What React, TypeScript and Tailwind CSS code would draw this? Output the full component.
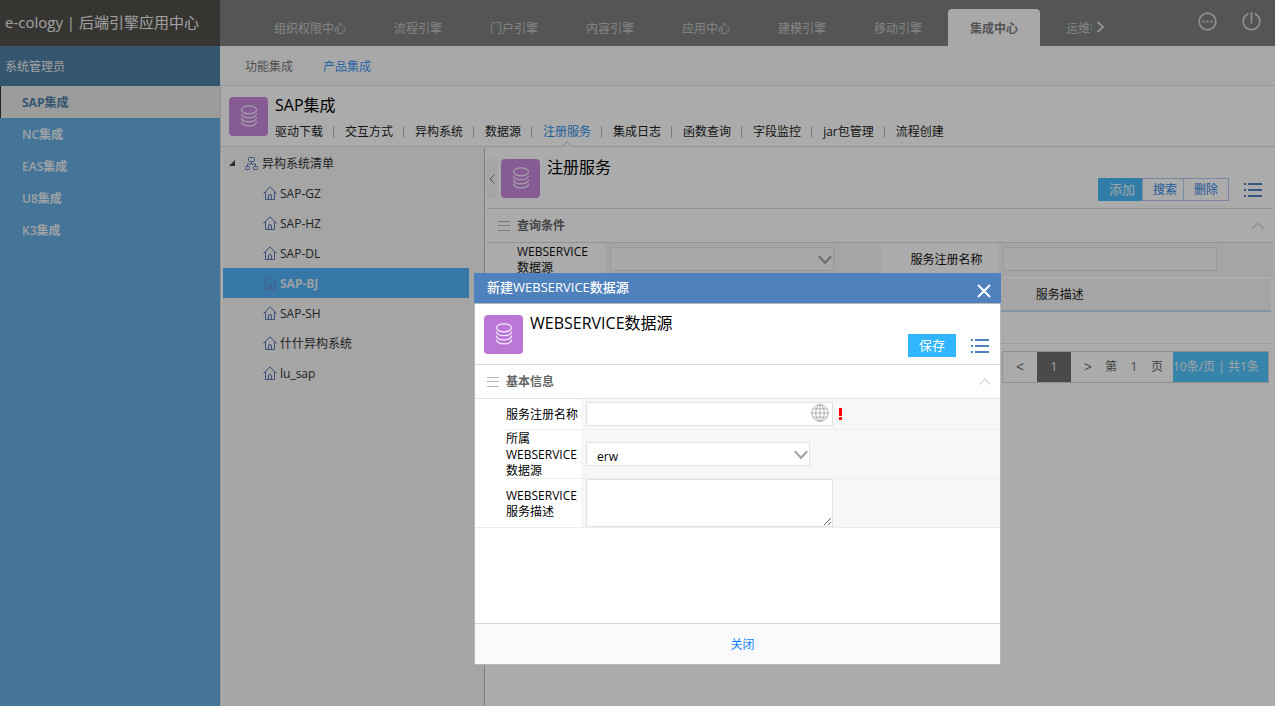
import React from 'react';
import clsx from 'clsx';

const topTabs = ['组织权限中心', '流程引擎', '门户引擎', '内容引擎', '应用中心', '建模引擎', '移动引擎', '集成中心', '运维中心'];
const sideItems = ['SAP集成', 'NC集成', 'EAS集成', 'U8集成', 'K3集成'];
const menuItems = ['驱动下载', '交互方式', '异构系统', '数据源', '注册服务', '集成日志', '函数查询', '字段监控', 'jar包管理', '流程创建'];
const systems = ['SAP-GZ', 'SAP-HZ', 'SAP-DL', 'SAP-BJ', 'SAP-SH', '什什异构系统', 'lu_sap'];

const DatabaseBadge: React.FC<{ className: string }> = ({ className }) => (
  <div className={clsx('h-[39px] w-[39px] shrink-0 rounded', className)}>
    <svg viewBox="0 0 39 39" className="h-full w-full" fill="none" stroke="#fff" strokeOpacity="0.85" strokeWidth="1.2">
      <ellipse cx="20" cy="12.8" rx="7.6" ry="4" />
      <path d="M12.4 16.5c.4 2.7 3.5 4.2 7.6 4.2s7.2-1.5 7.6-4.2M12.4 20.6c.4 2.7 3.5 4.2 7.6 4.2s7.2-1.5 7.6-4.2M12.4 24.7c.4 2.7 3.5 4.2 7.6 4.2s7.2-1.5 7.6-4.2" />
    </svg>
  </div>
);

const HouseIcon: React.FC<{ color: string }> = ({ color }) => (
  <svg width="14" height="14" viewBox="0 0 14 14" fill="none" stroke={color} strokeWidth="1">
    <path d="M.5 7.5L7 .8l6.5 6.7M2.5 6v7.5h9V6M5.500 13.5V10a1.500 1.5 0 0 1 3 0v3.5" />
  </svg>
);

const SitemapIcon = () => (
  <svg width="13" height="13" viewBox="0 0 13 13" fill="none" stroke="#5e76b8" strokeWidth="1">
    <rect x="3.5" y=".5" width="6" height="4" rx="1" />
    <rect x=".5" y="9.5" width="4" height="3" rx=".8" />
    <rect x="8.5" y="9.5" width="4" height="3" rx=".8" />
    <path d="M6.5 4.500V7M2.5 9.500V7h8v2.5" />
  </svg>
);

const ListIcon = () => (
  <svg className="mt-[2px]" width="18" height="15" viewBox="0 0 18 15" fill="#4f81bd">
    <path d="M0 0h2v2H0zM4 0h14v2H4zM0 6h2v2H0zM4 6h14v2H4zM0 12h2v2H0zM4 12h14v2H4z" />
  </svg>
);

const LinesIcon = () => (
  <svg width="12" height="10" viewBox="0 0 12 10" stroke="#b5b5b5">
    <path d="M0 .5h12M0 4.500h12M0 9.500h12" />
  </svg>
);

const ChevronUp = () => (
  <svg width="12" height="7" viewBox="0 0 12 7" fill="none" stroke="#d6d6d6" strokeWidth="1.2">
    <path d="M.5 6.500L6 1l5.5 5.5" />
  </svg>
);

const SelectArrow = () => (
  <svg
    className="pointer-events-none absolute top-2 right-[2px]"
    width="14"
    height="10"
    viewBox="0 0 14 10"
    fill="none"
    stroke="#a6a6a6"
    strokeWidth="2.2"
  >
    <path d="M.8 1.200L7 7.800l6.200-6.600" />
  </svg>
);

const GlobeIcon = () => (
  <svg width="18" height="18" viewBox="0 0 18 18" fill="none" stroke="#a8a8a8" strokeWidth=".9">
    <circle cx="9" cy="9" r="8.3" />
    <ellipse cx="9" cy="9" rx="4.2" ry="8.3" />
    <path d="M9 .7v16.600M.7 9h16.600M2.200 4.800h13.600M2.200 13.200h13.600" />
  </svg>
);

const Header = () => (
  <header className="flex h-[46px] bg-[#7d807f]">
    <div className="flex w-[220px] shrink-0 items-center bg-[#514f4b] pb-[3px] pl-[5px] text-[15px] text-[#f0f0f0]">
      e-cology | 后端引擎应用中心
    </div>
    <nav className="ml-8 flex min-w-0 flex-1 items-end gap-1 overflow-hidden">
      {topTabs.map((tab) => (
        <a
          key={tab}
          href="#"
          className={clsx(
            'flex h-[37px] shrink-0 items-center rounded-t px-[22px] pt-[2px]',
            tab === '集成中心' ? 'bg-[#fbfbfb] font-bold text-[#7d807f]' : 'text-[#c6c6c6]'
          )}
        >
          {tab}
        </a>
      ))}
    </nav>
    <div className="flex w-[183px] shrink-0 items-center pr-[14px]">
      <button aria-label="›" className="mt-2 mr-auto ml-1">
        <svg width="9" height="12" viewBox="0 0 9 12" fill="none" stroke="#d5d5d5" strokeWidth="2">
          <path d="M1.500 1L7 6l-5.500 5" />
        </svg>
      </button>
      <button className="mb-1 mr-[25px]" aria-label="…">
        <svg width="19" height="19" viewBox="0 0 19 19" fill="none" stroke="#d5d5d5" strokeWidth="1.700">
          <circle cx="9.500" cy="9.500" r="8.300" />
          <path d="M4.500 9.500h2M8.500 9.500h2M12.500 9.500h2" strokeWidth="2" />
        </svg>
      </button>
      <button className="mb-1" aria-label="⏻">
        <svg width="19" height="19" viewBox="0 0 19 19" fill="none" stroke="#d5d5d5" strokeWidth="1.700">
          <path d="M6.300 1.800a8.300 8.300 0 1 0 6.400 0M9.500 0v11.500" />
        </svg>
      </button>
    </div>
  </header>
);

const Sidebar = () => (
  <aside className="w-[220px] shrink-0 bg-[#67ade4]">
    <div className="flex h-10 items-center bg-[#4f80a6] pt-[2px] pl-[5px] text-[#f0f0f0]">系统管理员</div>
    <nav>
      {sideItems.map((item, i) =>
        i === 0 ? (
          <a
            key={item}
            href="#"
            className="flex h-8 items-center border-l border-[#333] bg-[#e9e9e9] pt-[2px] pl-[21px] font-bold text-[#4f80a6]"
          >
            {item}
          </a>
        ) : (
          <a
            key={item}
            href="#"
            className="mr-[10px] ml-[22px] flex h-8 items-center border-b border-[#75b5e7] pt-[2px] font-semibold text-[#eaf0f5]"
          >
            {item}
          </a>
        )
      )}
    </nav>
  </aside>
);

const SectionMenu = () => (
  <div className="flex h-[61px] shrink-0 items-start gap-[7px] border-b border-[#dcdcdc] bg-white pt-[11px] pl-2">
    <DatabaseBadge className="bg-[#c888e0]" />
    <div>
      <h1 className="h-4 text-base leading-4 text-black">SAP集成</h1>
      <nav className="mt-[11px] flex items-center">
        {menuItems.map((item, i) => (
          <React.Fragment key={item}>
            {i > 0 && <span className="mr-[11px] ml-[10px] h-3 w-px shrink-0 bg-[#c0b8b8]" />}
            <a
              href="#"
              className={clsx('relative leading-4 whitespace-nowrap', item === '注册服务' ? 'text-[#2f8fe8]' : 'text-[#222]')}
            >
              {item}
              {item === '注册服务' && (
                <svg className="absolute top-[17px] left-[19px]" width="10" height="6" viewBox="0 0 10 6" fill="#fff" stroke="#cfcfcf">
                  <path d="M0 5.500L5 .7l5 4.800" />
                </svg>
              )}
            </a>
          </React.Fragment>
        ))}
      </nav>
    </div>
  </div>
);

const SystemTree = () => (
  <div className="mt-px ml-[2px] w-[262px] shrink-0 border-r border-[#bdbdbd] bg-[#f6f6f6] pr-[15px] text-[#333]">
    <div className="flex h-[30px] items-center pl-[6px]">
      <svg width="6" height="6" viewBox="0 0 6 6" fill="#444">
        <path d="M6 0v6H0z" />
      </svg>
      <span className="mr-1 ml-[10px]">
        <SitemapIcon />
      </span>
      <span className="pt-[2px]">异构系统清单</span>
    </div>
    <ul>
      {systems.map((name) => {
        const active = name === 'SAP-BJ';
        return (
          <li
            key={name}
            className={clsx('flex h-[30px] items-center gap-[3px] pl-10', active && 'bg-[#51b2fb] font-bold text-[#e8eef4]')}
          >
            <HouseIcon color={active ? '#6a8cc8' : '#5e76b8'} />
            <span className="pt-[2px]">{name}</span>
          </li>
        );
      })}
    </ul>
  </div>
);

const Pagination = () => (
  <div className="mt-[7px] mr-1 flex h-8 items-center self-end border border-[#d5d5d5] text-[#666]">
    <button className="w-[34px] text-sm">&lt;</button>
    <button className="h-full w-[34px] bg-[#6f6f6f] text-[#f0f0f0]">1</button>
    <button className="w-[34px] text-sm">&gt;</button>
    <span>第</span>
    <span className="w-[34px] text-center">1</span>
    <span className="w-[22px]">页</span>
    <span className="h-full w-[95px] bg-[#51c5fd] leading-[30px] text-[#f0f4f8]">10条/页 | 共1条</span>
  </div>
);

const RegisterPanel = () => (
  <section className="mr-[2px] ml-[2px] flex min-w-0 flex-1 flex-col">
    <div className="flex h-[62px] shrink-0 items-start border-b border-[#dadada] pt-3">
      <button className="mr-1 flex h-[39px] w-[10px] items-center justify-center bg-[#f7f7f7]" aria-label="‹">
        <svg width="6" height="10" viewBox="0 0 6 10" fill="none" stroke="#777">
          <path d="M5.300 .8L1 5l4.300 4.200" />
        </svg>
      </button>
      <DatabaseBadge className="mr-[7px] bg-[#c888e0]" />
      <h2 className="text-base leading-4 text-black">注册服务</h2>
      <div className="mt-[19px] mr-[11px] ml-auto flex items-center">
        <button className="h-[23px] w-11 bg-[#48bdfa] pt-px pl-1 text-[13px] text-[#f0f4f8]">添加</button>
        <button className="h-[23px] w-[42px] border border-[#b4cdee] pt-px pl-1 text-[#2f86e8]">搜索</button>
        <button className="mr-[15px] -ml-px h-[23px] w-[46px] border border-[#b4cdee] pt-px text-[#2f86e8]">删除</button>
        <ListIcon />
      </div>
    </div>
    <div className="flex h-[34px] shrink-0 items-center border-b border-[#dcdcdc] pr-[9px] pl-[11px] font-bold text-[#666]">
      <LinesIcon />
      <span className="mr-auto ml-[7px]">查询条件</span>
      <ChevronUp />
    </div>
    <div className="flex h-[33px] shrink-0 border-b border-[#ededed] text-[#111]">
      <label htmlFor="query-source" className="w-[118px] shrink-0 pt-px pl-[30px] leading-4">
        WEBSERVICE
        <br />
        数据源
      </label>
      <div className="min-w-0 flex-1 bg-[#f7f7f7] pt-1 pl-[5px]">
        <div className="relative w-[224px]">
          <select id="query-source" className="h-6 w-full appearance-none border border-[#e5e5de] bg-[#fdfdfd] px-2">
            <option></option>
          </select>
          <SelectArrow />
        </div>
      </div>
      <label htmlFor="query-name" className="flex w-[117px] shrink-0 items-center pt-[2px] pl-[30px]">
        服务注册名称
      </label>
      <div className="min-w-0 flex-1 bg-[#f7f7f7] pt-1 pl-[5px]">
        <input id="query-name" className="h-6 w-[214px] border border-[#e5e5de] bg-[#fdfdfd] px-2" />
      </div>
    </div>
    <table className="mt-[3px] mr-[2px] table-fixed text-[#222]">
      <thead>
        <tr className="h-8 border-b-2 border-[#bcdcf8] bg-[#f7f7f7]">
          <th className="w-[70%]"></th>
          <th className="text-left font-normal">服务描述</th>
        </tr>
      </thead>
      <tbody>
        <tr className="h-8 border-b border-[#ededed]">
          <td></td>
          <td></td>
        </tr>
      </tbody>
    </table>
    <Pagination />
  </section>
);

interface FormRowProps {
  id: string;
  label: React.ReactNode;
  className: string;
  last?: boolean;
  children: React.ReactNode;
}

const FormRow: React.FC<FormRowProps> = ({ id, label, className, last, children }) => (
  <div className={clsx('flex', className, last && 'border-b border-[#ededed]')}>
    <label
      htmlFor={id}
      className={clsx(
        'ml-[31px] flex w-[75px] shrink-0 items-center pt-[2px] leading-4 text-black',
        !last && 'border-b border-[#ededed]'
      )}
    >
      {label}
    </label>
    <div className={clsx('flex flex-1 items-center bg-[#f7f7f7] pl-[5px]', !last && 'border-b border-[#efefef]')}>{children}</div>
  </div>
);

const SourceDialog = () => (
  <div className="fixed inset-0 flex items-start justify-center bg-black/33 pt-[273px] pl-[200px]">
    <div role="dialog" aria-labelledby="dialog-title" className="w-[527px] bg-white">
      <div className="flex h-[31px] items-center border-b border-[#b8b8b8] bg-[#4f81bd] pr-[10px] pl-[13px] text-white">
        <h2 id="dialog-title" className="mr-auto text-[13px] font-medium">
          新建WEBSERVICE数据源
        </h2>
        <button aria-label="×" className="mt-[6px]">
          <svg width="14" height="14" viewBox="0 0 14 14" stroke="#fff" strokeWidth="2">
            <path d="M1 1l12 12M13 1L1 13" />
          </svg>
        </button>
      </div>
      <div className="border-x border-b border-[#b8b8b8]">
        <div className="flex h-[61px] items-start border-b border-[#dadada] pt-[11px] pr-[11px] pl-[9px]">
          <DatabaseBadge className="mr-[7px] bg-[#bb76d6]" />
          <h3 className="mr-auto text-base leading-4 text-black">WEBSERVICE数据源</h3>
          <div className="mt-[19px] flex items-center">
            <button className="mr-[15px] h-[23px] w-12 bg-[#30b5ff] text-[13px] text-white">保存</button>
            <ListIcon />
          </div>
        </div>
        <div className="flex h-[34px] items-center border-b border-[#e2e2e2] pr-[9px] pl-3 font-bold text-[#666]">
          <LinesIcon />
          <span className="mr-auto ml-[7px]">基本信息</span>
          <ChevronUp />
        </div>
        <form>
          <FormRow id="name" label="服务注册名称" className="h-[31px]">
            <div className="relative w-[247px]">
              <input id="name" className="block h-6 w-full border border-[#e3e3da] bg-white pr-6 pl-2" />
              <span className="absolute top-[2px] right-1">
                <GlobeIcon />
              </span>
            </div>
            <svg className="ml-[6px]" width="3" height="12" viewBox="0 0 3 12" fill="#f00">
              <path d="M0 0h3v8H0zM0 9h3v3H0z" />
            </svg>
          </FormRow>
          <FormRow
            id="source"
            className="h-[49px]"
            label={
              <span>
                所属
                <br />
                WEBSERVICE
                <br />
                数据源
              </span>
            }
          >
            <div className="relative w-[224px]">
              <select id="source" className="block h-6 w-full appearance-none border border-[#e3e3da] bg-white pt-[6px] pl-[10px] text-black">
                <option>erw</option>
              </select>
              <SelectArrow />
            </div>
          </FormRow>
          <FormRow
            id="desc"
            className="h-[49px]"
            last
            label={
              <span>
                WEBSERVICE
                <br />
                服务描述
              </span>
            }
          >
            <textarea id="desc" className="h-12 w-[247px] border border-[#e3e3da] bg-white p-1" />
          </FormRow>
        </form>
        <div className="mt-[95px] flex h-[41px] items-center justify-center border-t border-[#d8d8d8] bg-[#fafafa]">
          <button className="pt-[2px] pl-[10px] text-[#0f7fff]">关闭</button>
        </div>
      </div>
    </div>
  </div>
);

const App: React.FC = () => {
  return (
    <div className="flex min-h-screen flex-col bg-white font-['Open_Sans','Noto_Sans_CJK_SC',sans-serif] text-xs">
      <Header />
      <div className="flex flex-1">
        <Sidebar />
        <main className="flex min-w-0 flex-1 flex-col">
          <nav className="flex h-10 shrink-0 items-center gap-[30px] border-b border-[#e2e2e2] bg-[#fbfbfb] pt-[2px] pl-[25px] text-[#777]">
            <a href="#">功能集成</a>
            <a href="#" className="text-[#3c97f5]">
              产品集成
            </a>
          </nav>
          <div className="flex flex-1 flex-col border-l border-[#dcdcdc]">
            <SectionMenu />
            <div className="flex flex-1">
              <SystemTree />
              <RegisterPanel />
            </div>
          </div>
        </main>
      </div>
      <SourceDialog />
    </div>
  );
};

export default App;
